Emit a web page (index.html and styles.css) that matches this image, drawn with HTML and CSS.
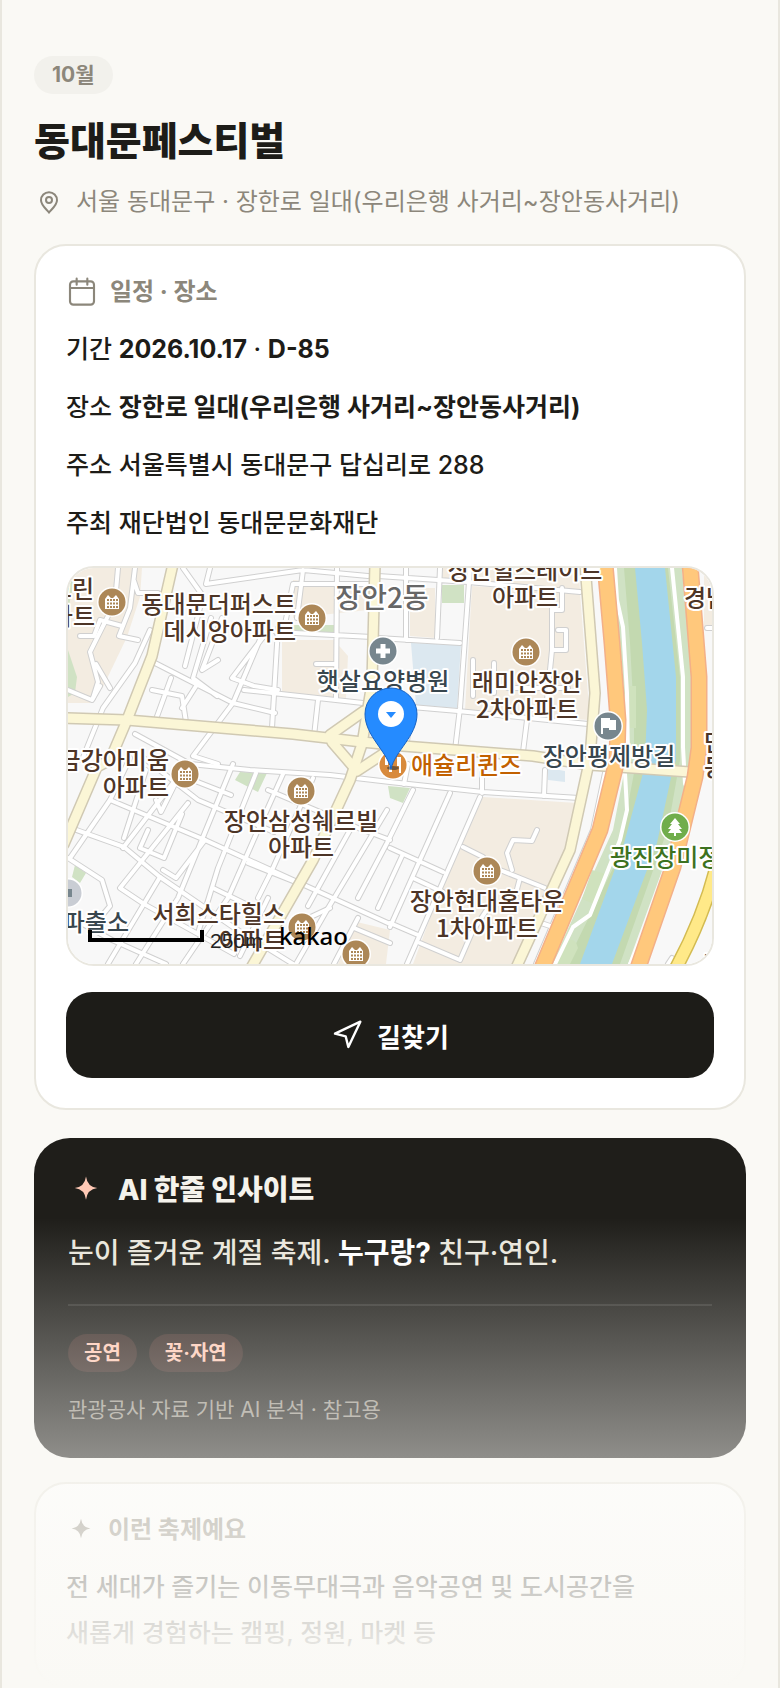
FILE: index.html
```html
<!DOCTYPE html>
<html lang="ko">
<head>
	<meta charset="UTF-8">
	<meta name="viewport" content="width=device-width, initial-scale=1">
	<title>동대문페스티벌</title>
	<link rel="stylesheet" href="styles.css">
</head>
<body>
	<main class="page">
		<header class="head">
			<span class="month">10월</span>
			<h1>동대문페스티벌</h1>
			<p class="place">
				<svg class="pin-icon" viewBox="0 0 24 24"><path d="M20 10.2c0 5-5.500 9-8 12.300-2.500-3.300-8-7.300-8-12.300a8 8 0 0 1 16 0z"/><circle cx="12" cy="10" r="3"/></svg>
				<span>서울 동대문구 · 장한로 일대(우리은행 사거리~장안동사거리)</span>
			</p>
		</header>

		<section class="card info">
			<h2 class="card-title">
				<svg class="line-icon" viewBox="0 0 24 24"><rect x="3" y="4" width="18" height="17.500" rx="2.500"/><path d="M3 9h18M8 2v4.500M16 2v4.500"/></svg>
				일정 · 장소
			</h2>
			<div class="rows">
				<p>기간 <b>2026.10.17</b> · <b>D-85</b></p>
				<p>장소 <b>장한로 일대(우리은행 사거리~장안동사거리)</b></p>
				<p>주소 서울특별시 동대문구 답십리로 288</p>
				<p>주최 재단법인 동대문문화재단</p>
			</div>
			<div class="map">
				<svg viewBox="0 0 644 396" preserveAspectRatio="xMidYMid slice">
					<defs>
						<g id="apt">
							<circle class="ring" r="15"/><circle class="brown" r="13.500"/>
							<path class="white" d="M-7-3l3-4 3 3h2l3-3 3 4V7H-7z"/>
							<path class="windows" d="M-5-2H6M-5 1.500H6M-5 5H6"/>
						</g>
						<g id="streets">
							<!-- north west -->
							<path d="M50 0L47 34 22 84 30 114 25 130M28 96l14 24M67 0L62 40 51 68 70 72M90 25H70l-4-12"/>
							<path d="M14 192L35 140 67 95 82 62"/>
							<path d="M0 122l24 10 8-14M12 68h14l6-16 22 6"/>
							<path d="M142 0l-4 16 97-14 65 6M115 0l20 28-18 70M235 2l-6 48"/>
							<path d="M87 95L165 135 207 145M84 122l30 6 4 26M103 110l-16 44M130 115l-16 25M149 128l-24-18 18-60M150 92l-16 10 20-52"/>
							<path d="M199 55L165 135 125 188 150 196M196 68l-32 42 22 8 24 4M176 122L295 135M210 60L204 160M250 132l-4 36"/>
							<path d="M269 0L268 130M208 64l96 5M215 66l10-50h75M248 96h20M338 0V72M372 0L369 70M310 8L400 14 512 24M310 70L392 75"/>
							<path d="M402 0L392 140 387 182M332 138L390 143 520 156M459 152l-4 32M344 138l-6 42"/>
							<path d="M484 30V82h14V62h-8M484 42h10V20M405 92v36M426 95v30M484 82l-5 50M440 120h60"/>
							<!-- south west -->
							<path d="M67 166L122 196 182 202 262 207 322 214 415 224 511 230"/>
							<path d="M0 259L56 279 92 309 165 359 225 396M0 290l34 22 8 26-10 12M42 232l95 40 88 40 97 44M72 187l58 45 76 32M117 209l46 18"/>
							<path d="M62 190L42 232 2 290M78 202L56 270M105 215L55 280M88 232l5 12 18-36M80 262l-8 18 24 10 18-44M120 235L52 320 76 336M92 309L40 396M137 272L108 310 95 302M165 196L110 330 68 396M188 205L150 300 130 365"/>
							<path d="M215 206L190 262 160 330 115 396M200 222l90 38 32 12M245 210L205 300 190 330M319 242L259 342 228 396M282 262l-42 76M145 320l45 22M200 330l-28 58M180 295l50 20"/>
							<path d="M0 348l44 24 54 24M76 336l90 50M290 350l-24 46M322 375l-36-15M262 340l-30 14"/>
							<path d="M412 229L339 396M345 222L319 275 290 330M382 225L352 292 322 359M322 280L375 304M334 288L310 340M322 355l28 12M345 310l30 14M477 202l-1 26M414 205v20M340 196l-4 20M645 60h-6"/>
							<path d="M395 279L415 289M432 302L477 320M444 302L439 285 445 272 464 273 469 262M352 375L392 392 405 362M452 310l-8 30M420 340l-20 30"/>
							<path d="M537 205L525 262 468 396M600 396l4-6M470 354l12 4"/>
						</g>
						<g id="avenues">
							<path d="M262 167L296 143M264 174L289 203 318 184"/>
							<path d="M105-4L84 88 59 152 42 192 29 199-4 276"/>
							<path d="M307-4L304 115 294 176 282 212 245 292 183 400"/>
							<path d="M517-4L527 125 522 190 502 282 448 400"/>
							<path d="M-4 150L59 152 225 166 294 174 335 178 465 188 522 197 622 204"/>
						</g>
						<g id="highways">
							<path d="M537-4L544 75 550 152 549 192 532 262 474 400"/>
							<path d="M622-4L631 109 631 180 627 209 605 299 570 400"/>
						</g>
					</defs>

					<rect class="ground" width="644" height="396"/>
					<path class="block" d="M0 0H74L72 29 59 69 35 119 22 135H0zM225 12L300 18V42L225 50zM214 72H266L280 88 278 130 214 125zM342 20H367V70L342 68zM374-2H510L512 22 374 12zM404 18L512 25 521 140 520 152 397 142zM636 0H644V58H636zM415 229L509 235 502 272 465 349 445 396H345L365 342zM289 354L322 362 318 396H270z"/>
					<path class="park" d="M0 82L9 109 7 125 0 129zM0 12L6 14 0 42zM222 57H267V64H222zM374 17H396V35H374zM320 218L342 220 335 235 322 230zM172 204L199 205 190 224 167 212zM7 297L18 305 12 315 4 309z"/>
					<path class="water-block" d="M343 75L393 77 389 140 348 137zM480 200L497 203V214L480 212z"/>
					<path class="park" d="M543 0H614L624 109V192L612 240 595 300 560 396H484L545 262 557 200 558 150 552 75z"/>
					<path class="grass" d="M556 0H600L612 109V192L600 260 552 396H498L550 290 566 205V150L562 75z"/>
					<path class="river" d="M567 0H597L608 109V192L604 205 589 275 544 396H512L555 279 575 205 577 192 579 142 574 75z"/>
					<path class="lawn" d="M562 118h6v42h-6zM524 302l14 4-12 30-12-5zM500 372q8-2 10 8l-8 16h-14z"/>

					<use href="#streets" class="street-edge"/>
					<use href="#streets" class="street"/>
					<path class="trail" d="M547 0L549 32 555 59 559 125 560 192 557 205 559 242 552 272 522 347 505 359 487 396M604 0L610 59 615 109V179L617 216M617 230L600 300 575 366 562 396"/>
					<use href="#avenues" class="avenue-edge"/>
					<use href="#avenues" class="avenue"/>
					<use href="#highways" class="highway-edge"/>
					<use href="#highways" class="highway"/>
					<path class="yellow-edge" d="M648 300Q635 350 608 400"/>
					<path class="yellow" d="M648 300Q635 350 608 400"/>

					<use href="#apt" x="44" y="34"/>
					<use href="#apt" x="244" y="50"/>
					<use href="#apt" x="458" y="84"/>
					<use href="#apt" x="117" y="206"/>
					<use href="#apt" x="233" y="223"/>
					<use href="#apt" x="234" y="359"/>
					<use href="#apt" x="288" y="386"/>
					<use href="#apt" x="419" y="303"/>
					<g transform="translate(315 83)"><circle class="ring" r="15"/><circle class="slate" r="13.500"/><path class="white" d="M-2.500-7h5v4.500H7v5H2.500V7h-5V2.500H-7v-5h4.500z"/></g>
					<g transform="translate(540 158)"><circle class="ring" r="15"/><circle class="slate" r="13.500"/><path class="white" d="M-7-8H2v2h6V4H1V2h-6v6h-2z"/></g>
					<g transform="translate(607 259)"><circle class="ring" r="15"/><circle class="green" r="13.500"/><path class="white" d="M0-9l5 6H3l4 5H4l3 4H1v3h-2V6h-6l3-4h-3l4-5h-2z"/></g>
					<g transform="translate(0 325)"><circle class="ring" r="15"/><circle class="pale" r="13.500"/><path class="slate" d="M-6-4H4V4H-6z"/></g>
					<g transform="translate(325 197)"><circle class="ring" r="15"/><circle class="orange" r="13.500"/><path class="white" d="M-8-8h3v8h-3zM4-8h4V8H6V1H4zM-4 0h3v7h-3z"/></g>

					<g class="label">
						<text class="end" x="26" y="30">그린</text>
						<text class="end" x="27" y="57">아파트</text>
						<text class="end" x="228" y="45">동대문더퍼스트</text>
						<text class="end" x="228" y="72">데시앙아파트</text>
						<text class="mid" x="457" y="11">장안힐스테이트</text>
						<text class="mid" x="457" y="38">아파트</text>
						<text x="616" y="39">경남</text>
						<text class="mid" x="459" y="123">래미안장안</text>
						<text class="mid" x="459" y="150">2차아파트</text>
						<text x="636" y="183">단지</text>
						<text x="636" y="208">동</text>
						<text class="end" x="101" y="201">금강아미움</text>
						<text class="end" x="101" y="228">아파트</text>
						<text class="mid" x="233" y="262">장안삼성쉐르빌</text>
						<text class="mid" x="233" y="288">아파트</text>
						<text class="end" x="217" y="355">서희스타힐스</text>
						<text class="end" x="217" y="381">아파트</text>
						<text class="mid" x="419" y="342">장안현대홈타운</text>
						<text class="mid" x="419" y="369">1차아파트</text>
						<text class="slate-text mid" x="315" y="122">햇살요양병원</text>
						<text class="slate-text mid" x="541" y="197">장안평제방길</text>
						<text class="slate-text end" x="61" y="363">파출소</text>
						<text class="slate-text" x="634" y="404">고</text>
						<text class="green-text" x="542" y="298">광진장미정원</text>
						<text class="orange-text" x="343" y="206">애슐리퀸즈</text>
						<text class="town mid" x="314" y="40">장안2동</text>
					</g>

					<!-- marker -->
					<ellipse class="shadow" cx="325" cy="200" rx="6" ry="2"/>
					<path class="marker" d="M323 201C319 183 297 168 297 146a26 26 0 0 1 52 0C349 168 327 183 323 201z"/>
					<circle class="white" cx="323" cy="146" r="13"/>
					<path class="marker-arrow" d="M318 144h10l-5 6z"/>

					<path class="scale-line" d="M22 362V372H134V362"/>
					<text class="scale-text" x="142" y="380">250m</text>
					<text class="kakao" x="211" y="377">kakao</text>
				</svg>
			</div>
			<a class="route" href="#route">
				<svg viewBox="0 0 24 24"><path d="M3 11L22 2 13 21 11 13z"/></svg>
				길찾기
			</a>
		</section>

		<section class="insight">
			<h2>
				<svg viewBox="0 0 24 24"><path d="M12 3Q12.900 9.900 19.500 10.700 12.900 11.500 12 18.500 11.100 11.500 4.500 10.700 11.100 9.900 12 3z"/></svg>
				AI 한줄 인사이트
			</h2>
			<p class="summary">눈이 즐거운 계절 축제. <b>누구랑?</b> 친구·연인.</p>
			<hr>
			<div class="tags">
				<span>공연</span>
				<span>꽃·자연</span>
			</div>
			<p class="source">관광공사 자료 기반 AI 분석 · 참고용</p>
		</section>

		<section class="card about">
			<h2 class="card-title">
				<svg class="spark" viewBox="0 0 24 24"><path d="M12 3Q12.900 9.900 19.500 10.700 12.900 11.500 12 18.500 11.100 11.500 4.500 10.700 11.100 9.900 12 3z"/></svg>
				이런 축제예요
			</h2>
			<p>전 세대가 즐기는 이동무대극과 음악공연 및 도시공간을<br>새롭게 경험하는 캠핑, 정원, 마켓 등</p>
		</section>
		<div class="fade"></div>
	</main>
</body>
</html>
```
FILE: styles.css
```css
*{margin:0;padding:0;box-sizing:border-box;}
body{
	background-color: #faf9f5;
	color: #1d1c18;
	font-family: Inter, "Noto Sans CJK KR", sans-serif;
	font-weight: 500;
	word-break: keep-all;
}
svg{
	display: block;
	flex: none;
}
.page{
	position: relative;
	min-height: 100vh;
	padding: 56px 32px 0;
	border-left: 2px solid #e9e7df;
	border-right: 2px solid #e9e7df;
	overflow: hidden;
}
/* 제목 */
.head{
	display: flex;
	flex-direction: column;
	align-items: flex-start;
	margin-bottom: 26px;
}
.month{
	padding: 0 18px;
	border-radius: 19px;
	background-color: #f2f1ec;
	color: #8c877b;
	font-size: 21px;
	font-weight: 700;
	line-height: 38px;
}
h1{
	margin: 22px 0 20px;
	font-size: 39px;
	font-weight: 800;
	line-height: 50px;
}
.place{
	display: flex;
	align-items: center;
	gap: 12px;
	color: #8c877b;
	font-size: 24px;
	font-weight: 400;
	line-height: 32px;
}
.pin-icon{
	width: 30px;
	height: 24px;
	fill: none;
	stroke: #8c877b;
	stroke-width: 2;
}
/* 카드 */
.card{
	padding: 30px;
	border: 2px solid #e9e7df;
	border-radius: 32px;
	background-color: #fff;
}
.card-title{
	display: flex;
	align-items: center;
	gap: 12px;
	color: #8c877b;
	font-size: 24px;
	font-weight: 700;
	line-height: 32px;
}
.line-icon{
	width: 32px;
	height: 32px;
	fill: none;
	stroke: #8c877b;
	stroke-width: 1.6;
	stroke-linecap: round;
}
.rows{
	display: flex;
	flex-direction: column;
	gap: 16px;
	margin: 20px 0 22px;
	font-size: 25px;
	line-height: 42px;
}
b{font-weight: 700;}
/* 지도 */
.map{
	height: 400px;
	border: 2px solid #e9e7df;
	border-radius: 28px;
	overflow: hidden;
}
.map svg{
	width: 100%;
	height: 100%;
}
.ground{fill: #f8f8f8;}
.block{fill: #f3ece1;}
.park{fill: #d0e2c4;}
.grass{fill: #c3d9b0;}
.lawn{fill: #cfe2bd;}
.river{fill: #a3d6eb;}
.water-block{fill: #dce8f0;}
.street,.street-edge,.avenue,.avenue-edge,.highway,.highway-edge,.trail,.yellow,.yellow-edge{
	fill: none;
	stroke-linejoin: round;
	stroke-linecap: round;
}
.street-edge{stroke: #d0d0d0;stroke-width: 6;}
.street{stroke: #fff;stroke-width: 4;}
.trail{stroke: #fff;stroke-width: 4;}
.avenue-edge{stroke: #d0c9b3;stroke-width: 12;}
.avenue{stroke: #fbf6d6;stroke-width: 9;}
.highway-edge{stroke: #f3b088;stroke-width: 17;}
.highway{stroke: #ffc87c;stroke-width: 14;}
.yellow-edge{stroke: #d3bb52;stroke-width: 14;}
.yellow{stroke: #ffe988;stroke-width: 11;}
.ring,.white{fill: #fff;}
.brown{fill: #ac8757;}
.slate{fill: #77868e;}
.green{fill: #70ad4b;}
.pale{fill: #c9cdd4;}
.orange{fill: #d88a3c;}
.windows{
	fill: none;
	stroke: #ac8757;
	stroke-width: 2;
	stroke-dasharray: 2 1;
}
.label{
	fill: #4d3527;
	stroke: #fff;
	stroke-width: 4;
	stroke-linejoin: round;
	paint-order: stroke;
	font-family: "Noto Sans CJK KR", sans-serif;
	font-size: 24px;
}
.mid{text-anchor: middle;}
.end{text-anchor: end;}
.slate-text{fill: #38464e;}
.green-text{fill: #3d7221;}
.orange-text{fill: #c26100;}
.town{
	fill: #666;
	font-size: 28px;
}
.shadow{fill: #333;opacity: .6;}
.marker{
	fill: #258bff;
	stroke: #1763c4;
}
.marker-arrow{fill: #258bff;}
.scale-line{
	fill: none;
	stroke: #000;
	stroke-width: 4;
}
.scale-text{
	fill: #222;
	font-family: "Liberation Sans", sans-serif;
	font-size: 21px;
	font-weight: 400;
}
.kakao{
	fill: #000;
	font-family: "Noto Sans", sans-serif;
	font-size: 24px;
}
.route{
	display: flex;
	align-items: center;
	justify-content: center;
	gap: 14px;
	height: 86px;
	margin-top: 26px;
	border-radius: 26px;
	background-color: #1d1c18;
	color: #fff;
	font-size: 26px;
	font-weight: 700;
	text-decoration: none;
}
.route svg{
	width: 32px;
	height: 32px;
	fill: none;
	stroke: #fff;
	stroke-width: 1.8;
	stroke-linejoin: round;
}
/* AI 인사이트 */
.insight{
	margin: 28px 0 24px;
	padding: 34px;
	border-radius: 36px;
	background-color: #1f1e1a;
	color: #e9e6dc;
}
.insight h2{
	display: flex;
	align-items: center;
	gap: 14px;
	color: #f5f3ec;
	font-size: 28px;
	font-weight: 800;
	line-height: 36px;
}
.insight h2 svg{
	width: 36px;
	height: 36px;
	fill: #ffc9b5;
}
.summary{
	margin: 22px 0 28px;
	font-size: 28px;
	line-height: 46px;
}
.summary b{color: #fff;}
.insight hr{
	border: 0;
	border-top: 2px solid #353430;
}
.tags{
	display: flex;
	gap: 12px;
	margin: 28px 0 24px;
}
.tags span{
	padding: 0 16px;
	border-radius: 19px;
	background-color: #3a2b26;
	color: #ffc9b5;
	font-size: 20px;
	font-weight: 700;
	line-height: 38px;
}
.source{
	color: #9a958a;
	font-size: 21px;
	font-weight: 400;
	line-height: 28px;
}
/* 소개 */
.spark{
	width: 30px;
	height: 30px;
	fill: #8c877b;
}
.about p{
	margin-top: 18px;
	font-size: 25px;
	line-height: 46px;
}
.fade{
	position: absolute;
	left: 0;
	right: 0;
	bottom: 0;
	height: 470px;
	background: linear-gradient(rgba(250,249,245,0), #faf9f5);
	pointer-events: none;
}
```
